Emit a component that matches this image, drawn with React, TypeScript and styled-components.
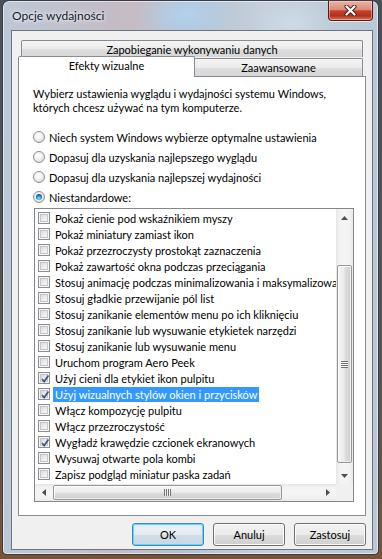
import React from 'react'
import styled, { createGlobalStyle } from 'styled-components'

const GlobalStyle = createGlobalStyle`
  html, body {
    margin: 0;
    padding: 0;
  }
  body {
    width: 382px;
    height: 559px;
    overflow: hidden;
    background: linear-gradient(180deg, #4b5058 0%, #5a544e 70%, #7a5236 100%);
    font-family: 'Segoe UI', Lato, 'Liberation Sans', sans-serif;
  }
`

const TEXT_SIZE = '11px'

const Frame = styled.div`
  box-sizing: border-box;
  width: 377px;
  height: 555px;
  margin-left: 2px;
  padding: 0 5px 4px 8px;
  border: 1px solid rgba(30, 38, 48, 0.85);
  border-radius: 7px 7px 5px 5px;
  box-shadow: inset 0 0 0 1px rgba(255, 255, 255, 0.55);
  background:
    radial-gradient(ellipse 50px 30px at 182px 14px, rgba(178, 210, 240, 0.95), rgba(178, 210, 240, 0)),
    radial-gradient(ellipse 40px 26px at 290px 22px, rgba(205, 220, 232, 0.9), rgba(205, 220, 232, 0)),
    linear-gradient(90deg, #bcc8d6 0%, #c3bcc6 28%, #c6bcc3 36%, #b4c1cf 48%, #c5d0dc 70%, #b9c7d6 100%);
  display: flex;
  flex-direction: column;
`

const TitleBar = styled.div`
  height: 29px;
  display: flex;
  justify-content: space-between;
  align-items: flex-start;
`

const Title = styled.span`
  margin: 7px 0 0 1px;
  font-size: 12px;
  line-height: 16px;
  color: #101a2a;
  text-shadow: 0 0 6px #ffffff, 0 0 3px rgba(255, 255, 255, 0.8);
`

const CloseButton = styled.div`
  box-sizing: border-box;
  width: 45px;
  height: 20px;
  border: 1px solid #5a1d14;
  border-top: none;
  border-radius: 0 0 4px 4px;
  background: linear-gradient(180deg, #eab4a6 0%, #dc8b78 45%, #c4432d 52%, #b42e1b 78%, #d8775b 100%);
  box-shadow: inset 0 0 0 1px rgba(255, 220, 210, 0.45), 0 1px 0 rgba(255, 255, 255, 0.5);
  display: flex;
  align-items: center;
  justify-content: center;
`

const Client = styled.div`
  box-sizing: border-box;
  height: 520px;
  border: 1px solid #6b7684;
  background: #f0f0f0;
  padding: 9px 6px 0;
  display: flex;
  flex-direction: column;
`

const BackRow = styled.div`
  display: flex;
  margin: 0 3px;
`

const BackTab = styled.div`
  flex: 1;
  box-sizing: border-box;
  height: 17px;
  border: 1px solid #898c95;
  border-bottom: none;
  border-radius: 2px 2px 0 0;
  background: linear-gradient(180deg, #f4f4f4 0%, #ebebeb 50%, #dedede 51%, #d6d6d6 100%);
  font-size: ${TEXT_SIZE};
  color: #000;
  display: flex;
  align-items: center;
  justify-content: center;
`

const FrontRow = styled.div`
  display: flex;
  align-items: flex-end;
  height: 20px;
  margin: 0 3px -1px 0;
  position: relative;
  z-index: 1;
`

const FrontTab = styled.div<{ $active?: boolean }>`
  box-sizing: border-box;
  ${p => (p.$active ? 'width: 177px;' : 'flex: 1; margin-left: -1px;')}
  height: ${p => (p.$active ? 21 : 18)}px;
  margin-bottom: ${p => (p.$active ? 0 : 1)}px;
  padding-bottom: ${p => (p.$active ? 3 : 0)}px;
  border: 1px solid #898c95;
  border-bottom: none;
  border-radius: 2px 2px 0 0;
  background: ${p =>
    p.$active
      ? '#ffffff'
      : 'linear-gradient(180deg, #f4f4f4 0%, #ebebeb 50%, #dedede 51%, #d6d6d6 100%)'};
  position: relative;
  z-index: ${p => (p.$active ? 2 : 1)};
  font-size: ${TEXT_SIZE};
  color: #000;
  display: flex;
  align-items: center;
  justify-content: center;
`

const Panel = styled.div`
  box-sizing: border-box;
  height: 440px;
  border: 1px solid #898c95;
  background: #ffffff;
  padding: 10px 12px 0 14px;
  display: flex;
  flex-direction: column;
`

const Description = styled.p`
  margin: 0;
  font-size: ${TEXT_SIZE};
  line-height: 14px;
  color: #000;
`

const RadioGroup = styled.div`
  margin-top: 12px;
  display: flex;
  flex-direction: column;
`

const RadioRow = styled.label`
  height: 20px;
  display: flex;
  align-items: center;
  gap: 4px;
  font-size: ${TEXT_SIZE};
  color: #000;
`

const RadioCircle = styled.span<{ $checked?: boolean }>`
  box-sizing: border-box;
  width: 12px;
  height: 12px;
  border-radius: 50%;
  border: 1px solid #8c8e91;
  background: radial-gradient(circle at 40% 35%, #ffffff 0%, #f1f1f1 45%, #cfd1d4 100%);
  display: flex;
  align-items: center;
  justify-content: center;

  &::after {
    content: '';
    display: ${p => (p.$checked ? 'block' : 'none')};
    width: 6px;
    height: 6px;
    border-radius: 50%;
    background: radial-gradient(circle at 50% 72%, #8be4ff 0%, #2b9fe6 38%, #0c4a7d 80%, #0a2f52 100%);
  }
`

const ListBox = styled.div`
  box-sizing: border-box;
  width: 320px;
  height: 294px;
  margin: 1px 0 0 1px;
  border: 1px solid #828790;
  background: #ffffff;
  display: grid;
  grid-template-columns: 1fr 17px;
  grid-template-rows: 1fr 17px;
`

const Viewport = styled.div`
  overflow: hidden;
  padding: 1px 0 0 3px;
`

const Row = styled.div`
  height: 16px;
  display: flex;
  align-items: center;
  gap: 3px;
  white-space: nowrap;
`

const CheckBox = styled.span`
  box-sizing: border-box;
  flex: none;
  width: 12px;
  height: 12px;
  border: 1px solid #8e8f8f;
  background: #f6f6f6;
  padding: 1px;
  position: relative;

  &::before {
    content: '';
    display: block;
    width: 100%;
    height: 100%;
    box-sizing: border-box;
    border: 1px solid #c4c6ca;
    background: linear-gradient(135deg, #d6d8dc 0%, #eeeeef 60%, #fbfbfb 100%);
  }

  svg {
    position: absolute;
    left: 0;
    top: 0;
  }
`

const ItemLabel = styled.span<{ $selected?: boolean }>`
  padding: 0 2px;
  height: 15px;
  line-height: 15px;
  font-size: ${TEXT_SIZE};
  color: ${p => (p.$selected ? '#ffffff' : '#000000')};
  background: ${p => (p.$selected ? '#3399ff' : 'transparent')};
`

const VScroll = styled.div`
  display: flex;
  flex-direction: column;
  background: linear-gradient(90deg, #e6e6e6 0%, #f2f2f2 20%, #f5f5f5 50%, #f2f2f2 80%, #e9e9e9 100%);
`

const HScroll = styled.div`
  display: flex;
  background: linear-gradient(180deg, #e6e6e6 0%, #f2f2f2 20%, #f5f5f5 50%, #f2f2f2 80%, #e9e9e9 100%);
`

const ArrowCell = styled.div`
  flex: none;
  width: 17px;
  height: 17px;
  display: flex;
  align-items: center;
  justify-content: center;
`

const Spacer = styled.div`
  flex: 1;
`

const Thumb = styled.div<{ $vertical?: boolean }>`
  box-sizing: border-box;
  flex: none;
  ${p =>
    p.$vertical
      ? 'margin: 39px 1px 0; height: 198px;'
      : 'margin: 1px 0 0 1px; width: 229px; height: 15px;'}
  border: 1px solid #979797;
  border-radius: 2px;
  background: ${p =>
    p.$vertical
      ? 'linear-gradient(90deg, #f6f6f6 0%, #ececec 45%, #dddddd 55%, #cfcfcf 100%)'
      : 'linear-gradient(180deg, #f6f6f6 0%, #ececec 45%, #dddddd 55%, #cfcfcf 100%)'};
  box-shadow: inset 1px 1px 0 #fdfdfd, inset -1px -1px 0 #ededed;
  display: flex;
  align-items: center;
  justify-content: center;
`

const Grip = styled.span<{ $vertical?: boolean }>`
  display: block;
  width: 7px;
  height: 7px;
  background: repeating-linear-gradient(
    ${p => (p.$vertical ? '180deg' : '90deg')},
    #727272 0 1px,
    #f4f4f4 1px 2px
  );
`

const Corner = styled.div`
  background: #f0f0f0;
`

const ButtonRow = styled.div`
  display: flex;
  justify-content: flex-end;
  gap: 9px;
  margin-top: 7px;
`

const Button = styled.button<{ $default?: boolean }>`
  box-sizing: border-box;
  width: 72px;
  height: 23px;
  padding: 0;
  font-family: inherit;
  font-size: ${TEXT_SIZE};
  color: #000;
  border-radius: 3px;
  border: 1px solid ${p => (p.$default ? '#3c8ac2' : '#707070')};
  background: ${p =>
    p.$default
      ? 'linear-gradient(180deg, #eef3f7 0%, #e5ecf1 50%, #d4dee6 51%, #c9d5df 100%)'
      : 'linear-gradient(180deg, #f2f2f2 0%, #ebebeb 50%, #dddddd 51%, #cfcfcf 100%)'};
  box-shadow: ${p =>
    p.$default ? 'inset 0 0 0 1px #6fd0f7, inset 0 0 3px 1px #b6e6fb' : 'inset 0 0 0 1px #fbfbfb'};
`

type Item = { label: string; checked?: boolean; selected?: boolean }

const items: Item[] = [
  { label: 'Pokaż cienie pod wskaźnikiem myszy' },
  { label: 'Pokaż miniatury zamiast ikon' },
  { label: 'Pokaż przezroczysty prostokąt zaznaczenia' },
  { label: 'Pokaż zawartość okna podczas przeciągania' },
  { label: 'Stosuj animację podczas minimalizowania i maksymalizowania okien' },
  { label: 'Stosuj gładkie przewijanie pól list' },
  { label: 'Stosuj zanikanie elementów menu po ich kliknięciu' },
  { label: 'Stosuj zanikanie lub wysuwanie etykietek narzędzi' },
  { label: 'Stosuj zanikanie lub wysuwanie menu' },
  { label: 'Uruchom program Aero Peek' },
  { label: 'Użyj cieni dla etykiet ikon pulpitu', checked: true },
  { label: 'Użyj wizualnych stylów okien i przycisków', checked: true, selected: true },
  { label: 'Włącz kompozycję pulpitu' },
  { label: 'Włącz przezroczystość' },
  { label: 'Wygładź krawędzie czcionek ekranowych', checked: true },
  { label: 'Wysuwaj otwarte pola kombi' },
  { label: 'Zapisz podgląd miniatur paska zadań' },
]

const radios = [
  'Niech system Windows wybierze optymalne ustawienia',
  'Dopasuj dla uzyskania najlepszego wyglądu',
  'Dopasuj dla uzyskania najlepszej wydajności',
  'Niestandardowe:',
]

function Arrow({ dir }: { dir: 'up' | 'down' | 'left' | 'right' }) {
  const points = {
    up: '0,4 3.5,0 7,4',
    down: '0,0 7,0 3.5,4',
    left: '4,0 4,7 0,3.5',
    right: '0,0 0,7 4,3.5',
  }[dir]
  const vertical = dir === 'up' || dir === 'down'
  return (
    <svg width={vertical ? 7 : 4} height={vertical ? 4 : 7} viewBox={vertical ? '0 0 7 4' : '0 0 4 7'}>
      <polygon points={points} fill="#4f4f4f" />
    </svg>
  )
}

export default function App() {
  return (
    <>
      <GlobalStyle />
      <Frame>
        <TitleBar>
          <Title>Opcje wydajności</Title>
          <CloseButton>
            <svg width="13" height="11" viewBox="0 0 13 11">
              <path d="M2.5 1.5 L10.5 9.5 M10.5 1.5 L2.5 9.5" stroke="#4a1a12" strokeWidth="4" strokeLinecap="round" />
              <path d="M2.5 1.5 L10.5 9.5 M10.5 1.5 L2.5 9.5" stroke="#ffffff" strokeWidth="2.2" strokeLinecap="round" />
            </svg>
          </CloseButton>
        </TitleBar>

        <Client>
          <BackRow>
            <BackTab>Zapobieganie wykonywaniu danych</BackTab>
          </BackRow>
          <FrontRow>
            <FrontTab $active>Efekty wizualne</FrontTab>
            <FrontTab>Zaawansowane</FrontTab>
          </FrontRow>

          <Panel>
            <Description>
              Wybierz ustawienia wyglądu i wydajności systemu Windows,
              <br />
              których chcesz używać na tym komputerze.
            </Description>

            <RadioGroup>
              {radios.map((r, i) => (
                <RadioRow key={r}>
                  <RadioCircle $checked={i === radios.length - 1} />
                  {r}
                </RadioRow>
              ))}
            </RadioGroup>

            <ListBox>
              <Viewport>
                {items.map(item => (
                  <Row key={item.label}>
                    <CheckBox>
                      {item.checked ? (
                        <svg width="12" height="12" viewBox="0 0 12 12">
                          <path d="M3 6 L5.2 8.6 L9.4 2.6" fill="none" stroke="#3d5185" strokeWidth="1.7" />
                        </svg>
                      ) : null}
                    </CheckBox>
                    <ItemLabel $selected={item.selected}>{item.label}</ItemLabel>
                  </Row>
                ))}
              </Viewport>

              <VScroll>
                <ArrowCell>
                  <Arrow dir="up" />
                </ArrowCell>
                <Thumb $vertical>
                  <Grip $vertical />
                </Thumb>
                <Spacer />
                <ArrowCell>
                  <Arrow dir="down" />
                </ArrowCell>
              </VScroll>

              <HScroll>
                <ArrowCell>
                  <Arrow dir="left" />
                </ArrowCell>
                <Thumb>
                  <Grip />
                </Thumb>
                <Spacer />
                <ArrowCell>
                  <Arrow dir="right" />
                </ArrowCell>
              </HScroll>

              <Corner />
            </ListBox>
          </Panel>

          <ButtonRow>
            <Button $default>OK</Button>
            <Button>Anuluj</Button>
            <Button>Zastosuj</Button>
          </ButtonRow>
        </Client>
      </Frame>
    </>
  )
}
